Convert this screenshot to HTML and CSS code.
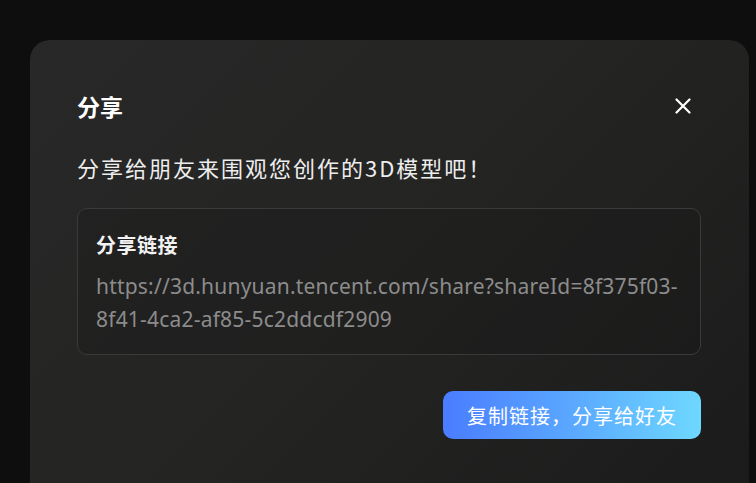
FILE: index.html
```html
<!DOCTYPE html>
<html lang="zh-CN">
<head>
    <meta charset="UTF-8">
    <meta name="viewport" content="width=device-width, initial-scale=1.0">
    <title>分享</title>
    <link rel="stylesheet" href="styles.css">
</head>
<body>
    <div class="overlay">
        <div class="modal">
            <div class="modal-header">
                <h2>分享</h2>
                <button class="close-button" aria-label="关闭">
                    <svg width="16" height="16" viewBox="0 0 16 16">
                        <path d="M1.5 1.5 L14.5 14.5 M14.5 1.5 L1.5 14.5" stroke="#ffffff" stroke-width="2.2" stroke-linecap="round"/>
                    </svg>
                </button>
            </div>
            <p class="modal-desc">分享给朋友来围观您创作的3D模型吧！</p>
            <div class="link-box">
                <h3>分享链接</h3>
                <p class="link-text">https://3d.hunyuan.tencent.com/share?shareId=8f375f03-8f41-4ca2-af85-5c2ddcdf2909</p>
            </div>
            <div class="modal-footer">
                <button class="copy-button">复制链接，分享给好友</button>
            </div>
        </div>
    </div>
</body>
</html>
```

FILE: styles.css
```css
html, body {
    height: 100%;
    margin: 0;
}
body {
    background-color: #0e0e0e;
    font-family: "Noto Sans", "Noto Sans CJK SC", sans-serif;
    overflow: hidden;
}
.overlay {
    height: 100%;
    box-sizing: border-box;
    padding: 40px 7px 0 30px;
}
.modal {
    height: 100%;
    background: linear-gradient(135deg, #282828 0%, #242423 50%, #1c1b1b 100%);
    border-radius: 20px 20px 0 0;
    padding: 49px 48px 0 47px;
    box-sizing: border-box;
}
.modal-header {
    display: flex;
    justify-content: space-between;
    align-items: center;
    height: 34px;
}
.modal-header h2 {
    margin: 0;
    font-size: 23px;
    font-weight: 700;
    color: #ffffff;
    font-family: "Noto Sans CJK SC", sans-serif;
}
.close-button {
    background: none;
    border: none;
    width: 24px;
    height: 24px;
    padding: 0;
    margin-right: 6px;
    display: flex;
    align-items: center;
    justify-content: center;
    cursor: pointer;
}
.modal-desc {
    margin: 29px 0 0 0;
    font-size: 22px;
    line-height: 30px;
    letter-spacing: 2px;
    color: #ededed;
    font-family: "Noto Sans CJK SC", sans-serif;
}
.link-box {
    margin-top: 26px;
    border: 1px solid #3a3a3a;
    border-radius: 10px;
    background-color: rgba(18, 18, 18, 0.25);
    padding: 22px 18px 18px 18px;
}
.link-box h3 {
    margin: 0;
    font-size: 20px;
    line-height: 28px;
    letter-spacing: 0.5px;
    font-weight: 700;
    color: #f2f2f2;
    font-family: "Noto Sans CJK SC", sans-serif;
}
.link-text {
    margin: 11px 0 0 0;
    font-size: 21px;
    line-height: 33px;
    letter-spacing: 0.2px;
    color: #8c8c8c;
}
.modal-footer {
    display: flex;
    justify-content: flex-end;
    margin-top: 36px;
}
.copy-button {
    height: 48px;
    width: 258px;
    border: none;
    border-radius: 10px;
    background: linear-gradient(90deg, #4a7cff 0%, #5aa8ff 50%, #6ed8ff 100%);
    color: #ffffff;
    font-size: 20px;
    letter-spacing: 1px;
    font-family: "Noto Sans CJK SC", sans-serif;
    cursor: pointer;
}
```
